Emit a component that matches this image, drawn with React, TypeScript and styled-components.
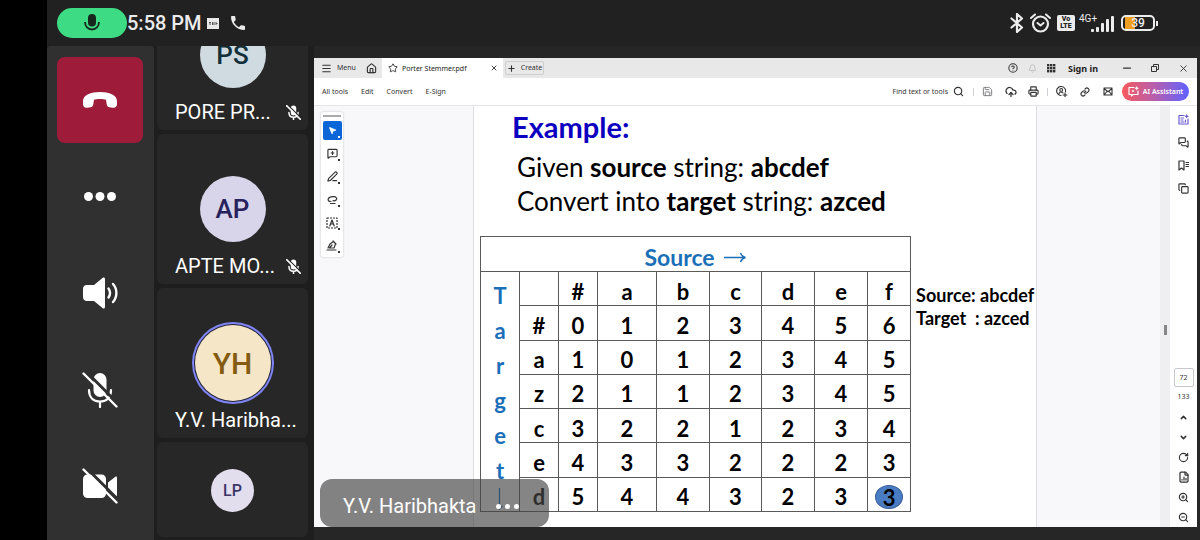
import React from "react";
import styled, { createGlobalStyle, css } from "styled-components";
import {
  Bell, ChevronDown, ChevronUp, CircleHelp, CloudUpload, Copy, FileChartColumn, House,
  Menu, MessageSquarePlus, MessagesSquare, Minus, MousePointer2, PenLine, Plus,
  Printer, RotateCw, Save, Search, Star, X, ZoomIn, ZoomOut,
} from "lucide-react";

const GlobalStyle = createGlobalStyle`
  *, *::before, *::after { box-sizing: border-box; }
  body { margin: 0; background: #000; }
  button, input { font: inherit; color: inherit; margin: 0; padding: 0; border: 0; background: none; }
  svg { display: block; flex: none; }
`;

const Screen = styled.div`
  display: flex;
  flex-direction: column;
  height: 100vh;
  margin-left: 47px;
  overflow: hidden;
  background: #212121;
  color: #fff;
  font-family: Roboto, "Liberation Sans", sans-serif;
`;

const StatusBar = styled.header`
  display: flex;
  flex: none;
  align-items: center;
  justify-content: space-between;
  height: 46px;
  padding: 0 45px 0 10px;
  color: #ececec;
`;

const StatusGroup = styled.div<{ $gap: number }>`
  display: flex;
  align-items: center;
  gap: ${(p) => p.$gap}px;
`;

const MicPill = styled.span`
  display: flex;
  align-items: center;
  justify-content: center;
  width: 70px;
  height: 30px;
  border-radius: 15px;
  background: #3ddc84;
`;

const Clock = styled.time`
  padding-right: 5px;
  font-size: 20px;
  font-weight: 500;
  line-height: 30px;
  white-space: nowrap;
`;

const Body = styled.div`
  display: flex;
  flex: 1;
  min-height: 0;
`;

const CallControls = styled.nav`
  display: flex;
  flex: none;
  flex-direction: column;
  justify-content: space-between;
  width: 107px;
  padding: 11px 10px;
  border-radius: 4px 4px 0 0;
  background: #303030;
`;

const ControlButton = styled.button<{ $danger?: boolean }>`
  display: flex;
  align-items: center;
  justify-content: center;
  height: 86px;
  width: 86px;
  border-radius: 8px;
  ${(p) => p.$danger && css`background: #9e1b39;`}
`;

const People = styled.ul`
  display: flex;
  flex: none;
  flex-direction: column;
  justify-content: flex-end;
  gap: 4px;
  width: 160px;
  margin: 0;
  padding: 0 6px 3px 3px;
  overflow: hidden;
  list-style: none;
  background: #1e1e1e;
`;

const Person = styled.li<{ $compact?: boolean }>`
  display: flex;
  flex: none;
  flex-direction: column;
  align-items: center;
  height: ${(p) => (p.$compact ? 95 : 150)}px;
  padding-top: ${(p) => (p.$compact ? 27 : 34)}px;
  border-radius: 6px;
  background: #272727;
`;

const AvatarSlot = styled.div<{ $compact?: boolean }>`
  display: flex;
  align-items: center;
  justify-content: center;
  height: ${(p) => (p.$compact ? 43 : 82)}px;
`;

const Avatar = styled.span<{ $size: number; $bg: string; $ink: string; $ring?: boolean }>`
  display: flex;
  align-items: center;
  justify-content: center;
  width: ${(p) => p.$size}px;
  height: ${(p) => p.$size}px;
  border-radius: 50%;
  background: ${(p) => p.$bg};
  color: ${(p) => p.$ink};
  font-size: ${(p) => (p.$size < 50 ? 16 : p.$size > 70 ? 30 : 26)}px;
  font-weight: 500;
  ${(p) => p.$ring && css`box-shadow: 0 0 0 1px #24243a, 0 0 0 3px #7f85f5;`}
`;

const NameRow = styled.div`
  display: flex;
  align-items: center;
  justify-content: space-between;
  width: 100%;
  height: 32px;
  padding: 0 7px 0 18px;
  font-size: 20px;
  line-height: 24px;
  white-space: nowrap;
`;

const Stage = styled.main`
  flex: 1;
  min-width: 0;
  padding: 12px 3px 13px 0;
  background: #262626;
`;

const Viewer = styled.section`
  position: relative;
  display: flex;
  flex-direction: column;
  height: 100%;
  overflow: hidden;
  background: #fff;
  color: #333;
  font-family: "Noto Sans", "Open Sans", sans-serif;
  font-size: 7px;
`;

const TitleBar = styled.div`
  display: flex;
  flex: none;
  align-items: stretch;
  height: 20px;
  background: #e8e8e9;
`;

const BarButton = styled.button<{ $width?: number }>`
  display: flex;
  flex: none;
  align-items: center;
  justify-content: center;
  gap: 5px;
  width: ${(p) => (p.$width ? `${p.$width}px` : "auto")};
  line-height: 12px;
  white-space: nowrap;
`;

const MenuButton = styled(BarButton)`
  justify-content: flex-start;
  padding-left: 7px;
`;

const FileTab = styled.div`
  display: flex;
  align-items: center;
  gap: 4px;
  width: 121px;
  padding: 0 5px 0 6px;
  background: #fff;
  color: #222;
  white-space: nowrap;
  & > button { margin-left: auto; }
`;

const CreateButton = styled(BarButton)`
  align-self: center;
  height: 14px;
  margin-left: 2px;
  border: 1px solid #cfcfd2;
  border-radius: 2px;
`;

const Spacer = styled.div`
  flex: 1;
`;

const SignIn = styled.button`
  padding: 0 15px 0 7px;
  color: #1c1c1c;
  font-size: 9px;
  font-weight: 700;
  white-space: nowrap;
`;

const Toolbar = styled.div`
  display: flex;
  flex: none;
  align-items: center;
  height: 28px;
  padding: 0 8px;
  border-bottom: 1px solid #e4e4e6;
`;

const ToolLinks = styled.div`
  display: flex;
  gap: 13px;
`;

const FindButton = styled(BarButton)`
  margin-right: 7px;
`;

const Divider = styled.span`
  width: 1px;
  height: 8px;
  margin: 0 2px;
  background: #d0d0d4;
`;

const AssistantButton = styled.button`
  display: flex;
  align-items: center;
  justify-content: center;
  gap: 4px;
  width: 67px;
  height: 19px;
  margin-left: 3px;
  border-radius: 10px;
  background: linear-gradient(90deg, #f8595c, #b45fb0 50%, #5f62ff);
  color: #fff;
  font-weight: 600;
  white-space: nowrap;
`;

const Workspace = styled.div`
  display: flex;
  flex: 1;
  min-height: 0;
  background: #f8f7fa;
`;

const Gutter = styled.div<{ $width: number }>`
  flex: none;
  width: ${(p) => p.$width}px;
  padding: 6px 7px;
`;

const ToolPalette = styled.div`
  display: flex;
  flex-direction: column;
  align-items: center;
  gap: 4px;
  width: 22px;
  padding: 3px 0 2px;
  border-radius: 2px;
  background: #fff;
  box-shadow: 0 0 2px #b5b5ba;
  &::before {
    content: "";
    width: 18px;
    height: 2px;
    background: #a9a9ac;
  }
`;

const PaletteButton = styled.button<{ $active?: boolean }>`
  position: relative;
  display: flex;
  align-items: center;
  justify-content: center;
  width: 19px;
  height: 19px;
  border-radius: 2px;
  color: ${(p) => (p.$active ? "#fff" : "#333")};
  background: ${(p) => (p.$active ? "#0d66d8" : "transparent")};
  &::after {
    content: "";
    position: absolute;
    right: 2px;
    bottom: 2px;
    border: 1px solid currentColor;
  }
`;

const Page = styled.article`
  flex: 1;
  min-width: 0;
  padding: 3px 0 0 6px;
  border: solid #dddde0;
  border-width: 0 1px;
  background: #fff;
  color: #000;
  font-family: Lato, "Open Sans", sans-serif;
`;

const Heading = styled.h1`
  margin: 0;
  padding-left: 32px;
  color: #0b00c0;
  font-size: 29px;
  font-weight: 700;
  line-height: 36px;
`;

const Statement = styled.p`
  margin: 5px 0 18px;
  padding-left: 37px;
  font-size: 26px;
  line-height: 34px;
  white-space: nowrap;
`;

const Figure = styled.div`
  display: flex;
  align-items: flex-start;
`;

const Matrix = styled.table`
  flex: none;
  width: 431px;
  height: 276px;
  border-collapse: collapse;
  table-layout: fixed;
  font-size: 22px;
  line-height: 26px;
  font-weight: 700;
  text-align: center;
  th, td {
    padding: 6px 0 0;
    border: 1px solid #5a5a5a;
    font-weight: 700;
  }
`;

const SourceHead = styled.th`
  height: 35px;
  color: #1a6fb8;
  font-size: 23px;
`;

const SourceLabel = styled.span`
  display: flex;
  align-items: center;
  justify-content: center;
  gap: 8px;
`;

const TargetHead = styled.th`
  color: #1a6fb8;
  line-height: 35px;
  vertical-align: top;
  span { display: block; }
  svg { margin: 0 auto; }
`;

const Result = styled.span`
  display: block;
  width: 28px;
  height: 24px;
  margin: 0 auto;
  border: 1px solid #3a609a;
  border-radius: 50%;
  background: #4a7cc4;
  line-height: 23px;
`;

const Notes = styled.p`
  margin: 48px 0 0;
  padding-left: 5px;
  font-size: 18px;
  font-weight: 700;
  line-height: 23px;
  white-space: pre;
`;

const ScrollTrack = styled.div`
  display: flex;
  flex: none;
  align-items: center;
  justify-content: center;
  width: 10px;
  padding-top: 26px;
  background: #efeef1;
  &::after {
    content: "";
    width: 3px;
    height: 10px;
    background: #85858a;
  }
`;

const SidePanel = styled.aside`
  display: flex;
  flex: none;
  flex-direction: column;
  align-items: center;
  justify-content: space-between;
  width: 27px;
  padding-top: 2px;
  background: #fff;
`;

const PanelGroup = styled.div`
  display: flex;
  flex-direction: column;
  align-items: center;
`;

const PanelButton = styled.button<{ $tall?: boolean; $accent?: boolean }>`
  display: flex;
  align-items: center;
  justify-content: center;
  width: 19px;
  height: ${(p) => (p.$tall ? 23 : 20)}px;
  color: ${(p) => (p.$accent ? "#6a5acd" : "#333")};
`;

const PageInput = styled.input`
  width: 20px;
  height: 19px;
  border: 1px solid #c9c9cd;
  border-radius: 2px;
  text-align: center;
`;

const PageCount = styled.span`
  line-height: 20px;
`;

const Caption = styled.div`
  position: absolute;
  left: 6px;
  bottom: 0;
  display: flex;
  align-items: center;
  gap: 20px;
  height: 48px;
  padding: 6px 30px 0 23px;
  border-radius: 12px;
  background: rgba(70, 70, 70, 0.66);
  color: #fff;
  font-family: Roboto, "Liberation Sans", sans-serif;
  font-size: 20px;
  white-space: nowrap;
`;

const stroke = { fill: "none", stroke: "currentColor", strokeWidth: 2, strokeLinecap: "round", strokeLinejoin: "round" } as const;

const HangUpIcon = () => (
  <svg width="36" height="18" viewBox="0 0 36 18" fill="#fff">
    <path d="M18 1C27 1 35 4 35 10v3c0 2.600-1.600 4-4 3.700l-3.500-.5c-1.800-.3-2.600-1.400-2.800-3L24 8.800c-3-1.200-9-1.200-12 0l-.7 4.400c-.2 1.600-1 2.700-2.800 3l-3.500.5c-2.400.3-4-1.100-4-3.700v-3C1 4 9 1 18 1z" />
  </svg>
);

const DotsIcon = ({ width = 32, r = 4.5 }: { width?: number; r?: number }) => (
  <svg width={width} height={r * 2} fill="#fff">
    {[r, width / 2, width - r].map((x) => <circle key={x} cx={x} cy={r} r={r} />)}
  </svg>
);

const SpeakerIcon = () => (
  <svg width="36" height="32" viewBox="0 0 36 32">
    <path d="M5 8h7l8.500-7c1.200-1 2.500-.4 2.500 1v28c0 1.400-1.300 2-2.500 1L12 24H5c-2.500 0-4-1.500-4-4v-8c0-2.500 1.500-4 4-4z" fill="#fff" />
    <path d="M26.500 11.500c1.800 2.600 1.800 6.400 0 9M31 7c4.500 5 4.500 13 0 18" {...stroke} strokeWidth="2.400" />
  </svg>
);

const MicOffIcon = ({ size = 36, slash = "#303030" }: { size?: number; slash?: string }) => (
  <svg width={size} height={size} viewBox="0 0 36 36">
    <rect x="11.500" y="1" width="13" height="24" rx="6.500" fill="#fff" />
    <path d="M7 18c0 7 4 11.500 11 11.500S29 25 29 18M18 30v5" {...stroke} strokeWidth={size < 20 ? 3.5 : 2.2} />
    <path d="M4 -.5L37 32.500" stroke={slash} strokeWidth="3" />
    <path d="M1.500 1.500l33 33" {...stroke} strokeWidth={size < 20 ? 3.5 : 2.4} />
  </svg>
);

const CameraOffIcon = () => (
  <svg width="36" height="36" viewBox="0 0 36 36">
    <rect x="1" y="6.500" width="23" height="23.500" rx="4.500" fill="#fff" />
    <path d="M26 14.500l7-5.500c1-.8 2-.3 2 1v17c0 1.300-1 1.800-2 1l-7-5.500z" fill="#fff" />
    <path d="M4 -.5L37.500 33" stroke="#303030" strokeWidth="3" />
    <path d="M1.500 1.500l33 33" {...stroke} strokeWidth="2.400" />
  </svg>
);

const PillMicIcon = () => (
  <svg width="16" height="20" viewBox="0 0 16 20">
    <rect x="4" y="1" width="8" height="12.500" rx="4" fill="#16281d" />
    <path d="M1 9c0 4.500 3 7.500 7 7.500s7-3 7-7.500" fill="none" stroke="#16281d" strokeWidth="1.800" />
  </svg>
);

const NoteIcon = () => (
  <svg width="12" height="11">
    <rect width="12" height="11" fill="#e8e8e8" />
    <path d="M2 4.500h2M3 4v3M5.500 4v3M7 4v3M9 4v3M9 5.500h1.500" stroke="#555" fill="none" />
  </svg>
);

const HandsetIcon = () => (
  <svg width="14" height="14" viewBox="3 3 18 18" fill="#ececec">
    <path d="M6.620 10.790c1.440 2.830 3.760 5.140 6.590 6.590l2.200-2.200c.27-.27.670-.36 1.020-.24 1.120.37 2.330.57 3.570.57.550 0 1 .45 1 1V20c0 .55-.45 1-1 1-9.390 0-17-7.610-17-17 0-.55.450-1 1-1h3.500c.55 0 1 .45 1 1 0 1.250.2 2.450.57 3.570.11.350.03.740-.25 1.020l-2.200 2.200z" />
  </svg>
);

const BluetoothIcon = () => (
  <svg width="14" height="20" viewBox="0 0 14 20">
    <path d="M1.500 5.500l10.500 9L7 19V1l5 4.500-10.500 9" {...stroke} strokeWidth="2.200" />
  </svg>
);

const AlarmIcon = () => (
  <svg width="21" height="20" viewBox="0 0 21 20">
    <circle cx="10.500" cy="11" r="7.500" {...stroke} strokeWidth="2.200" />
    <path d="M7.500 10l3 2.500 3-2.500M1 5l4-3.500M20 5l-4-3.500" {...stroke} />
  </svg>
);

const VolteBadge = styled.span`
  display: flex;
  flex-direction: column;
  justify-content: center;
  width: 18px;
  height: 16px;
  border-radius: 2px;
  background: #ececec;
  color: #222;
  font-size: 7px;
  font-weight: 900;
  line-height: 7px;
  text-align: center;
`;

const Network = styled.span`
  display: flex;
  align-items: flex-end;
  margin-left: -2px;
`;

const NetworkLabel = styled.span`
  align-self: flex-start;
  width: 11px;
  overflow: visible;
  font-size: 10px;
  line-height: 8px;
  white-space: nowrap;
`;

const SignalIcon = () => (
  <svg width="25" height="17" fill="#ececec">
    {[3, 5, 9, 13, 16].map((h, i) => <rect key={h} x={i * 5 + 1} y={17 - h} width="3" height={h} rx="1" />)}
  </svg>
);

const Battery = styled.span`
  position: relative;
  display: flex;
  align-items: center;
  justify-content: center;
  width: 34px;
  height: 16px;
  border: 2px solid #ececec;
  border-radius: 5px;
  background: linear-gradient(90deg, transparent 2px, #f0a020 2px, #f0a020 12px, transparent 12px);
  font-size: 12px;
  font-weight: 500;
  line-height: 12px;
  &::after {
    content: "";
    position: absolute;
    right: -5px;
    width: 2px;
    height: 5px;
    background: #ececec;
  }
`;

const LassoIcon = () => (
  <svg width="11" height="10" viewBox="0 0 11 10">
    <path d="M3.500 8.500h4.500M4 6.500C1.500 6.500.8 5.300 1.200 4 2 2 5 1.500 7 1.700s3 1.300 2.600 2.600C9.200 5.500 7.500 6 6 5.700" {...stroke} strokeWidth="1.200" />
  </svg>
);

const TextBoxIcon = () => (
  <svg width="12" height="12" viewBox="0 0 12 12">
    <rect x="1" y="1" width="10" height="10" {...stroke} strokeWidth="1.200" strokeDasharray="2 1" strokeLinecap="butt" />
    <path d="M3.800 9L6 3l2.200 6M4.600 7h2.800" {...stroke} strokeWidth="1.200" />
  </svg>
);

const SignIcon = () => (
  <svg width="12" height="11" viewBox="0 0 12 11">
    <path d="M1 10h9M2 8L4 4l3.500-2.500L9.500 4 8 8H3.500L6 5M7 1l3 3" {...stroke} strokeWidth="1.200" />
  </svg>
);

const AppsIcon = () => (
  <svg width="9" height="9" fill="#333">
    {[0, 3, 6].map((y) => [0, 3, 6].map((x) => <rect key={`${x}${y}`} x={x} y={y} width="2.400" height="2.400" />))}
  </svg>
);

const RestoreIcon = () => (
  <svg width="8" height="8" fill="none" stroke="#333">
    <path d="M.5 2.500h5v5h-5zM2.500 2.500v-2h5v5h-2" />
  </svg>
);

const ShareIcon = () => (
  <svg width="12" height="11" viewBox="0 0 12 11">
    <path d="M9.500 6A4.500 4.500 0 1 0 5 9.500M3 8c0-1.500 1-2 2-2s2 .3 2 1M9 7v4M7 9h4" {...stroke} strokeWidth="1.100" />
    <circle cx="5.200" cy="3.900" r="1.400" {...stroke} strokeWidth="1.100" />
  </svg>
);

const LinkIcon = () => (
  <svg width="10" height="10" viewBox="0 0 24 24">
    <path d="M10 13a5 5 0 0 0 7.500.5l3-3a5 5 0 0 0-7-7L12 5M14 11a5 5 0 0 0-7.500-.5l-3 3a5 5 0 0 0 7 7L12 19" {...stroke} strokeWidth="2.800" />
  </svg>
);

const EnvelopeIcon = () => (
  <svg width="10" height="9" viewBox="0 0 10 9">
    <path d="M1 1h8v7H1zM1 1.500l4 3.200 4-3.200M1.500 7.500L3.500 5M8.500 7.500L6.500 5" {...stroke} strokeWidth="1.100" />
  </svg>
);

const SparkChatIcon = () => (
  <svg width="11" height="11" viewBox="0 0 11 11">
    <path d="M6 1.500H1v7h2.500V10L5 8.500h5V5" {...stroke} strokeWidth="1.200" />
    <path d="M8.700 0l.7 1.500 1.500.7-1.500.7-.7 1.500-.7-1.500-1.500-.7L8 1.500zM5 3.300l.5 1.200 1.200.5-1.200.5L5 6.700l-.5-1.200L3.300 5l1.200-.5z" fill="currentColor" />
  </svg>
);

const SummaryIcon = () => (
  <svg width="11" height="11" viewBox="0 0 11 11">
    <path d="M6 1.500H1V10h9V5M3 4h2.500M3 6h2M3 8h3M7.500 6v2" {...stroke} strokeWidth="1.200" />
    <path d="M8.700 0l.8 1.500 1.500.8-1.500.8-.8 1.500-.8-1.500-1.500-.8 1.500-.8z" fill="currentColor" />
  </svg>
);

const BookmarkListIcon = () => (
  <svg width="11" height="11" viewBox="0 0 11 11">
    <path d="M6 1H1v9l2.500-2L6 10zM8 2.500h2.500M8 4.500h2.500M8 6.500h2.500" {...stroke} strokeWidth="1.200" />
  </svg>
);

const LongArrow = () => (
  <svg width="24" height="11" viewBox="0 0 24 11">
    <path d="M1 5.500h21M17.500 1c1 2.500 2.500 4 5 4.500-2.500.5-4 2-5 4.500" fill="none" stroke="#1a6fb8" strokeWidth="1.500" />
  </svg>
);

const DownArrow = () => (
  <svg width="9" height="22" viewBox="0 0 9 22">
    <path d="M3.500 0v21M.5 18l3 3 3-3" fill="none" stroke="#1a6fb8" strokeWidth="1.300" />
  </svg>
);

const columns = [39, 39, 39, 59, 53, 52, 53, 53, 43];
const letters = ["#", "a", "b", "c", "d", "e", "f"];
const rows: [string, number[]][] = [
  ["#", [0, 1, 2, 3, 4, 5, 6]],
  ["a", [1, 0, 1, 2, 3, 4, 5]],
  ["z", [2, 1, 1, 2, 3, 4, 5]],
  ["c", [3, 2, 2, 1, 2, 3, 4]],
  ["e", [4, 3, 3, 2, 2, 2, 3]],
  ["d", [5, 4, 4, 3, 2, 3, 3]],
];

const people = [
  { initials: "PS", name: "PORE PR...", bg: "#d0dbe1", ink: "#12303a", size: 66, muted: true },
  { initials: "AP", name: "APTE MO...", bg: "#d8d5ea", ink: "#27215c", size: 66, muted: true },
  { initials: "YH", name: "Y.V. Haribha...", bg: "#f5e6c8", ink: "#835c12", size: 76, speaking: true },
];

function DistanceTable() {
  return (
    <Matrix>
      <colgroup>{columns.map((w, i) => <col key={i} width={w} />)}</colgroup>
      <tbody>
        <tr>
          <SourceHead colSpan={9}><SourceLabel>Source <LongArrow /></SourceLabel></SourceHead>
        </tr>
        <tr>
          <TargetHead rowSpan={7}>
            {"Target".split("").map((c, i) => <span key={i}>{c}</span>)}
            <DownArrow />
          </TargetHead>
          <td />
          {letters.map((c) => <th key={c} scope="col">{c}</th>)}
        </tr>
        {rows.map(([label, values], r) => (
          <tr key={label}>
            <th scope="row">{label}</th>
            {values.map((v, c) => (
              <td key={c}>{r === 5 && c === 6 ? <Result>{v}</Result> : v}</td>
            ))}
          </tr>
        ))}
      </tbody>
    </Matrix>
  );
}

export default function App() {
  return (
    <>
      <GlobalStyle />
      <Screen>
        <StatusBar>
          <StatusGroup $gap={0}>
            <MicPill><PillMicIcon /></MicPill>
            <Clock>5:58 PM</Clock>
            <StatusGroup $gap={12}><NoteIcon /><HandsetIcon /></StatusGroup>
          </StatusGroup>
          <StatusGroup $gap={6}>
            <BluetoothIcon />
            <AlarmIcon />
            <VolteBadge><span>Vo</span><span>LTE</span></VolteBadge>
            <Network><NetworkLabel>4G+</NetworkLabel><SignalIcon /></Network>
            <Battery>39</Battery>
          </StatusGroup>
        </StatusBar>
        <Body>
          <CallControls>
            <ControlButton $danger aria-label="End call"><HangUpIcon /></ControlButton>
            <ControlButton aria-label="More"><DotsIcon /></ControlButton>
            <ControlButton aria-label="Speaker"><SpeakerIcon /></ControlButton>
            <ControlButton aria-label="Unmute"><MicOffIcon /></ControlButton>
            <ControlButton aria-label="Turn camera on"><CameraOffIcon /></ControlButton>
          </CallControls>
          <People>
            {people.map((p) => (
              <Person key={p.initials}>
                <AvatarSlot>
                  <Avatar $size={p.size} $bg={p.bg} $ink={p.ink} $ring={p.speaking}>{p.initials}</Avatar>
                </AvatarSlot>
                <NameRow>{p.name}{p.muted && <MicOffIcon size={15} slash="#272727" />}</NameRow>
              </Person>
            ))}
            <Person $compact>
              <AvatarSlot $compact><Avatar $size={43} $bg="#e2deee" $ink="#3b3566">LP</Avatar></AvatarSlot>
            </Person>
          </People>
          <Stage>
            <Viewer>
              <TitleBar>
                <MenuButton $width={46}><Menu size={11} strokeWidth={2.5} /> Menu</MenuButton>
                <BarButton $width={22} aria-label="Home"><House size={11} strokeWidth={2.5} /></BarButton>
                <FileTab>
                  <Star size={10} /> Porter Stemmer.pdf
                  <BarButton aria-label="Close tab"><X size={8} strokeWidth={2.5} /></BarButton>
                </FileTab>
                <CreateButton $width={39}><Plus size={9} strokeWidth={3} /> Create</CreateButton>
                <Spacer />
                <BarButton $width={19} aria-label="Help"><CircleHelp size={10} strokeWidth={2.5} /></BarButton>
                <BarButton $width={19} aria-label="Notifications"><Bell size={9} color="#b5b5b8" /></BarButton>
                <BarButton $width={19} aria-label="Apps"><AppsIcon /></BarButton>
                <SignIn>Sign in</SignIn>
                <BarButton $width={28} aria-label="Minimize"><Minus size={12} strokeWidth={2.5} /></BarButton>
                <BarButton $width={28} aria-label="Restore"><RestoreIcon /></BarButton>
                <BarButton $width={28} aria-label="Close"><X size={11} /></BarButton>
              </TitleBar>
              <Toolbar>
                <ToolLinks>
                  <BarButton>All tools</BarButton>
                  <BarButton>Edit</BarButton>
                  <BarButton>Convert</BarButton>
                  <BarButton>E-Sign</BarButton>
                </ToolLinks>
                <Spacer />
                <FindButton>Find text or tools <Search size={11} strokeWidth={2.5} /></FindButton>
                <Divider />
                <BarButton $width={23} aria-label="Save"><Save size={11} color="#75757a" /></BarButton>
                <BarButton $width={23} aria-label="Upload"><CloudUpload size={12} strokeWidth={2.5} /></BarButton>
                <BarButton $width={23} aria-label="Print"><Printer size={11} strokeWidth={2.5} /></BarButton>
                <Divider />
                <BarButton $width={23} aria-label="Share"><ShareIcon /></BarButton>
                <BarButton $width={23} aria-label="Copy link"><LinkIcon /></BarButton>
                <BarButton $width={23} aria-label="Email"><EnvelopeIcon /></BarButton>
                <AssistantButton><SparkChatIcon /> AI Assistant</AssistantButton>
              </Toolbar>
              <Workspace>
                <Gutter $width={159}>
                  <ToolPalette>
                    <PaletteButton $active aria-label="Select"><MousePointer2 size={9} fill="#fff" /></PaletteButton>
                    <PaletteButton aria-label="Comment"><MessageSquarePlus size={11} strokeWidth={2.5} /></PaletteButton>
                    <PaletteButton aria-label="Highlight"><PenLine size={11} strokeWidth={2.5} /></PaletteButton>
                    <PaletteButton aria-label="Draw"><LassoIcon /></PaletteButton>
                    <PaletteButton aria-label="Add text"><TextBoxIcon /></PaletteButton>
                    <PaletteButton aria-label="Sign"><SignIcon /></PaletteButton>
                  </ToolPalette>
                </Gutter>
                <Page>
                  <Heading>Example:</Heading>
                  <Statement>
                    Given <b>source</b> string: <b>abcdef</b><br />
                    Convert into <b>target</b> string: <b>azced</b>
                  </Statement>
                  <Figure>
                    <DistanceTable />
                    <Notes>{"Source: abcdef\nTarget  : azced"}</Notes>
                  </Figure>
                </Page>
                <Gutter $width={123} />
                <ScrollTrack />
                <SidePanel>
                  <PanelGroup>
                    <PanelButton $tall $accent aria-label="Summary"><SummaryIcon /></PanelButton>
                    <PanelButton $tall aria-label="Comments"><MessagesSquare size={11} strokeWidth={2.5} /></PanelButton>
                    <PanelButton $tall aria-label="Bookmarks"><BookmarkListIcon /></PanelButton>
                    <PanelButton $tall aria-label="Pages"><Copy size={11} strokeWidth={2.5} /></PanelButton>
                  </PanelGroup>
                  <PanelGroup>
                    <PageInput aria-label="Page" defaultValue="72" />
                    <PageCount>133</PageCount>
                    <PanelButton aria-label="Previous page"><ChevronUp size={9} strokeWidth={4} /></PanelButton>
                    <PanelButton aria-label="Next page"><ChevronDown size={9} strokeWidth={4} /></PanelButton>
                    <PanelButton aria-label="Rotate"><RotateCw size={11} strokeWidth={2.5} /></PanelButton>
                    <PanelButton aria-label="Page display"><FileChartColumn size={12} strokeWidth={2.5} /></PanelButton>
                    <PanelButton aria-label="Zoom in"><ZoomIn size={11} strokeWidth={2.5} /></PanelButton>
                    <PanelButton aria-label="Zoom out"><ZoomOut size={11} strokeWidth={2.5} /></PanelButton>
                  </PanelGroup>
                </SidePanel>
              </Workspace>
              <Caption>Y.V. Haribhakta <DotsIcon width={23} r={2.5} /></Caption>
            </Viewer>
          </Stage>
        </Body>
      </Screen>
    </>
  );
}
